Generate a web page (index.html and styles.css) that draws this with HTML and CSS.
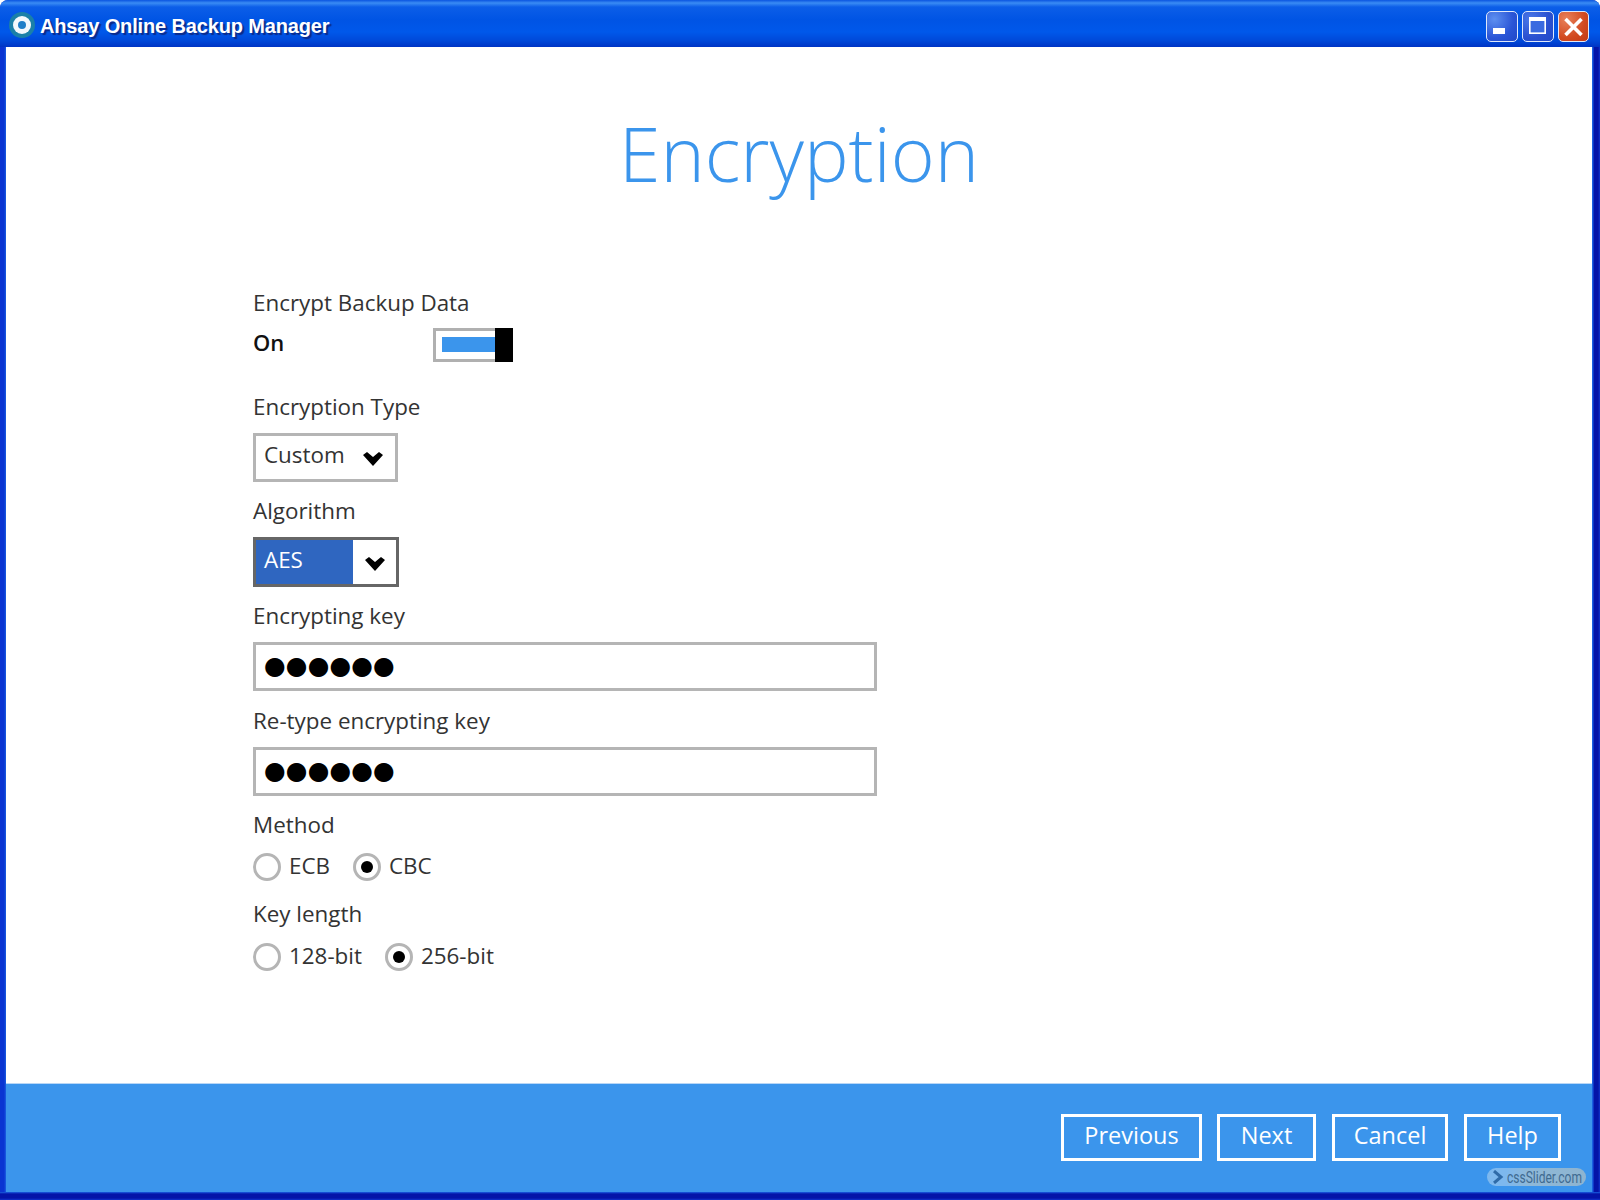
FILE: index.html
```html
<!DOCTYPE html>
<html lang="en">
<head>
<meta charset="utf-8">
<title>Ahsay Online Backup Manager</title>
<link rel="stylesheet" href="styles.css">
</head>
<body>
<div class="window">
  <header class="titlebar">
    <svg class="app-icon" width="30" height="30" viewBox="0 0 30 30">
      <circle cx="15" cy="15" r="13" fill="#1a80a8"/>
      <circle cx="15" cy="15" r="9" fill="#f2f8fc"/>
      <circle cx="15" cy="15" r="4" fill="#1f7fc8"/>
    </svg>
    <span class="app-title">Ahsay Online Backup Manager</span>
    <div class="caption-buttons">
      <div class="cap-btn">
        <svg width="32" height="32" viewBox="0 0 32 32"><rect x="7" y="18" width="12" height="6" fill="#fff"/></svg>
      </div>
      <div class="cap-btn cap-max">
        <svg width="32" height="32" viewBox="0 0 32 32"><rect x="7.8" y="7.8" width="15.4" height="15.4" fill="#3a6ae0" stroke="#fff" stroke-width="1.6"/><rect x="7" y="7" width="17" height="4" fill="#fff"/></svg>
      </div>
      <div class="cap-btn cap-close">
        <svg width="31" height="32" viewBox="0 0 31 32"><path d="M7.5 9 L23.5 25 M23.5 9 L7.5 25" stroke="#fff" stroke-width="3.6" fill="none"/></svg>
      </div>
    </div>
  </header>
  <main class="content">
    <h1 class="page-title">Encryption</h1>
    <form class="form">
      <div class="label label-first">Encrypt Backup Data</div>
      <div class="toggle-row">
        <span class="on-text">On</span>
        <div class="toggle"><div class="toggle-fill"></div><div class="toggle-knob"></div></div>
      </div>
      <div class="label label-type">Encryption Type</div>
      <div class="select">
        <span class="select-value">Custom</span>
        <span class="select-arrow"><svg width="20" height="14" viewBox="0 0 20 14"><path d="M0 3 L4 0 L10 5 L16 0 L20 3 L10 14 Z" fill="#000"/></svg></span>
      </div>
      <div class="label label-algo">Algorithm</div>
      <div class="select select-focus">
        <span class="select-value">AES</span>
        <span class="select-arrow"><svg width="20" height="14" viewBox="0 0 20 14"><path d="M0 3 L4 0 L10 5 L16 0 L20 3 L10 14 Z" fill="#000"/></svg></span>
      </div>
      <div class="label label-key1">Encrypting key</div>
      <div class="text-input">●●●●●●</div>
      <div class="label label-key2">Re-type encrypting key</div>
      <div class="text-input">●●●●●●</div>
      <div class="label label-method">Method</div>
      <div class="radio-row">
        <span class="radio"></span><span class="radio-text">ECB</span>
        <span class="radio radio-on"></span><span class="radio-text">CBC</span>
      </div>
      <div class="label label-length">Key length</div>
      <div class="radio-row radio-row-last">
        <span class="radio"></span><span class="radio-text">128-bit</span>
        <span class="radio radio-on"></span><span class="radio-text">256-bit</span>
      </div>
    </form>
  </main>
  <footer class="footer">
    <a class="btn btn-prev">Previous</a>
    <a class="btn btn-next">Next</a>
    <a class="btn btn-cancel">Cancel</a>
    <a class="btn btn-help">Help</a>
    <div class="watermark"><span class="wm-arrow"><svg width="12" height="14" viewBox="0 0 12 14"><path d="M2 1 L9 7 L2 13" fill="none" stroke="#2f6ba8" stroke-width="3"/></svg></span><span class="wm-text">cssSlider.com</span></div>
  </footer>
</div>
</body>
</html>
```
FILE: styles.css
```css
* { box-sizing: border-box; }
html, body { margin: 0; padding: 0; }
body { width: 1600px; height: 1200px; overflow: hidden; background: #fff; font-family: "Open Sans", sans-serif; }
.window {
  width: 1600px; height: 1200px;
  display: flex; flex-direction: column;
  padding: 0 8px 8px 6px;
  border-radius: 8px 8px 0 0;
  background:
    linear-gradient(0deg, #1034cc 0, #0414a8 2px, #0414a8 6px, #1a5fe2 8px, transparent 8px),
    linear-gradient(90deg, #0a34d2 0, #0a34d2 4px, #1a5fe2 6px, #1a5fe2 1593px, #0414a8 1594px, #0414a8 1598px, #1034cc 1600px);
  position: relative;
}
.titlebar {
  margin: 0 -8px 0 -6px;
  height: 47px; flex: none;
  display: flex; align-items: center;
  padding: 0 11px 0 7px;
  border-radius: 8px 8px 0 0;
  background: linear-gradient(180deg, #0a54e0 0, #3a8cf4 3px, #0c5ee8 7px, #0054e4 20px, #0058ea 32px, #0048d8 41px, #0034c4 47px);
}
.app-icon { flex: none; margin-top: 3px; }
.app-title {
  margin-left: 3px; margin-top: 6px;
  color: #fff; font-family: "Liberation Sans", sans-serif; font-weight: 700; font-size: 20px; letter-spacing: -0.15px;
  text-shadow: 2px 2px 1px #0b2a88;
  white-space: nowrap;
}
.caption-buttons { margin-left: auto; margin-top: 5px; display: flex; gap: 4px; }
.cap-btn {
  width: 32px; height: 31px; border: 1.5px solid #dfe8fa; border-radius: 5px;
  background: radial-gradient(circle at 25% 25%, #5d8ff0, #2a55d6 60%, #2048c8);
  display: flex; align-items: center; justify-content: center;
  overflow: hidden;
}
.cap-max { background: radial-gradient(circle at 25% 25%, #4a78e8, #2a50d0 60%, #2048c8); }
.cap-close { width: 31px; background: radial-gradient(circle at 25% 25%, #e8815a, #d24a20 60%, #c23a14); }
.cap-btn svg { flex: none; }
.content { flex: 1; background: #fff; min-height: 0; }
.page-title {
  margin: 66px 0 0; text-align: center;
  font-weight: 300; font-size: 75px; line-height: 80px; color: #3b95ec;
}
.form { padding-left: 247px; color: #333; font-size: 22.4px; }
.label { line-height: 32px; height: 30px; color: #333; white-space: nowrap; }
.label-first { margin-top: 94px; }
.toggle-row { display: flex; align-items: flex-start; height: 40px; margin-top: 5px; }
.on-text { font-weight: 600; color: #111; width: 180px; align-self: center; font-size: 22px; }
.toggle { width: 80px; height: 34px; margin-top: 6px; border: 3px solid #b0b0b0; position: relative; }
.toggle-fill { position: absolute; left: 6px; top: 6px; width: 53px; height: 15px; background: #3b95ec; }
.toggle-knob { position: absolute; right: -3px; top: -3px; width: 18px; height: 34px; background: #000; }
.label-type { margin-top: 29px; }
.select {
  width: 145px; height: 49px; border: 3px solid #b5b5b5; margin-top: 12px;
  display: flex; align-items: center; justify-content: space-between; background: #fff;
}
.select-value { padding-left: 8px; padding-bottom: 6px; color: #333; }
.select-arrow { display: flex; padding-right: 12px; padding-top: 3px; }
.select-focus { width: 146px; height: 50px; border-color: #666; }
.select-focus .select-value { background: #2f66c0; color: #fff; width: 97px; height: 100%; display: flex; align-items: center; }
.select-focus .select-arrow { padding-right: 11px; }
.label-algo { margin-top: 13px; }
.label-key1 { margin-top: 13px; }
.label-key2 { margin-top: 14px; }
.text-input {
  width: 624px; height: 49px; border: 3px solid #b5b5b5; margin-top: 12px;
  padding-left: 8px; color: #000;
  font-family: "DejaVu Sans", sans-serif; font-size: 25px; line-height: 41px;
}
.label-method { margin-top: 13px; }
.label-length { margin-top: 17px; }
.radio-row { display: flex; align-items: center; height: 28px; margin-top: 14px; }
.radio-row-last { margin-top: 15px; }
.radio { width: 28px; height: 28px; border: 3px solid #b5b5b5; border-radius: 50%; flex: none; position: relative; background: #fff; }
.radio-on::after { content: ""; position: absolute; left: 5px; top: 5px; width: 12px; height: 12px; border-radius: 50%; background: #000; }
.radio-text { margin-left: 8px; margin-right: 23px; color: #333; padding-bottom: 4px; }
.footer {
  height: 109px; flex: none; background: #3b95ec; position: relative;
  border-top: 1px solid #b8d6f6;
  display: flex; justify-content: flex-end; align-items: flex-start;
  padding: 30px 31px 0 0; gap: 16px;
}
.btn {
  height: 47px; border: 3px solid #fff; color: #fff; font-size: 23.5px; font-weight: 500;
  padding-bottom: 6px;
  display: flex; align-items: center; justify-content: center;
}
.btn-prev { width: 141px; margin-right: -1px; }
.btn-next { width: 99px; }
.btn-cancel { width: 116px; }
.btn-help { width: 97px; }
.watermark {
  position: absolute; left: 1481px; top: 84px; width: 99px; height: 18px;
  border-radius: 9px; background: linear-gradient(90deg, #7db8ee 0, #7db8ee 20px, #8eb8d8 40px, #8eb4d0 100%);
  display: flex; align-items: center; padding-left: 5px;
  font-family: "Roboto", sans-serif; font-size: 16px; color: #3f6a90;
}
.wm-arrow { display: flex; width: 15px; flex: none; }
.wm-text { transform: scaleX(0.75); transform-origin: left center; white-space: nowrap; }
```
